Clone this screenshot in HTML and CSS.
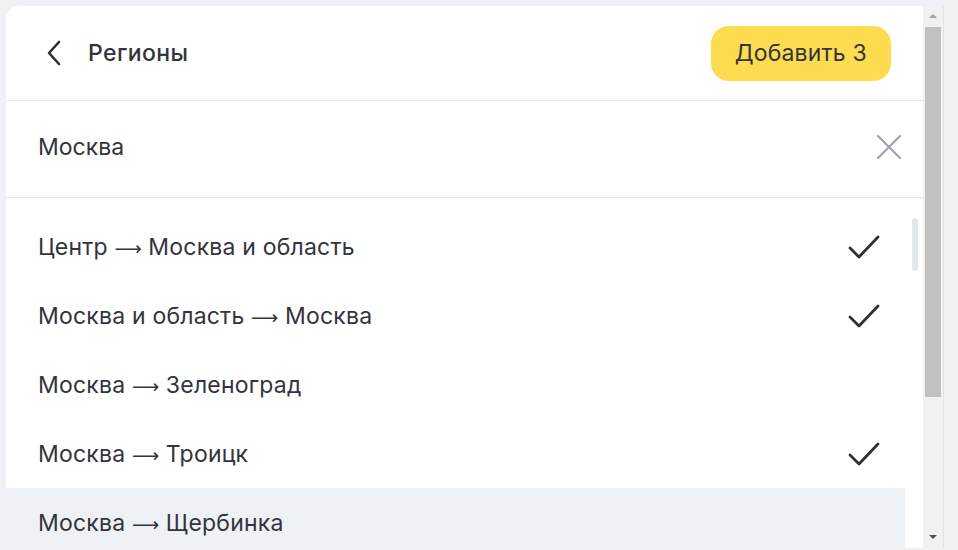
FILE: index.html
```html
<!DOCTYPE html>
<html lang="ru">
<head>
  <meta charset="UTF-8">
  <meta name="viewport" content="width=device-width, initial-scale=1.0">
  <title>Регионы</title>
  <link rel="stylesheet" href="styles.css">
</head>
<body>
  <div class="panel">
    <div class="dialog">
      <div class="dialog-header">
        <button class="back-btn" aria-label="Назад">
          <svg width="16" height="26" viewBox="0 0 16 26"><path d="M13 2 L3 13 L13 24" fill="none" stroke="#2e2f38" stroke-width="2.6" stroke-linecap="round" stroke-linejoin="round"/></svg>
        </button>
        <div class="dialog-title">Регионы</div>
        <button class="add-btn">Добавить 3</button>
      </div>
      <div class="search">
        <div class="search-text">Москва</div>
        <button class="clear-btn" aria-label="Очистить">
          <svg width="26" height="26" viewBox="0 0 26 26"><path d="M2 2 L24 24 M24 2 L2 24" fill="none" stroke="#9fa3b4" stroke-width="2.2" stroke-linecap="round"/></svg>
        </button>
      </div>
      <div class="list-wrap">
        <ul class="region-list">
          <li class="region-item">
            <span>Центр <span class="arrow">⟶</span> Москва и область</span>
            <svg class="check" width="32" height="26" viewBox="0 0 32 26"><path d="M2 14 L11 23 L30 3" fill="none" stroke="#2e2f38" stroke-width="2.8" stroke-linecap="round" stroke-linejoin="round"/></svg>
          </li>
          <li class="region-item">
            <span>Москва и область <span class="arrow">⟶</span> Москва</span>
            <svg class="check" width="32" height="26" viewBox="0 0 32 26"><path d="M2 14 L11 23 L30 3" fill="none" stroke="#2e2f38" stroke-width="2.8" stroke-linecap="round" stroke-linejoin="round"/></svg>
          </li>
          <li class="region-item">
            <span>Москва <span class="arrow">⟶</span> Зеленоград</span>
          </li>
          <li class="region-item">
            <span>Москва <span class="arrow">⟶</span> Троицк</span>
            <svg class="check" width="32" height="26" viewBox="0 0 32 26"><path d="M2 14 L11 23 L30 3" fill="none" stroke="#2e2f38" stroke-width="2.8" stroke-linecap="round" stroke-linejoin="round"/></svg>
          </li>
          <li class="region-item region-item_hover">
            <span>Москва <span class="arrow">⟶</span> Щербинка</span>
          </li>
        </ul>
        <div class="list-scroll">
          <div class="list-scroll-thumb"></div>
        </div>
      </div>
    </div>
    <div class="scrollbar">
      <div class="scrollbar-arrow scrollbar-arrow_up"></div>
      <div class="scrollbar-thumb"></div>
      <div class="scrollbar-track"></div>
      <div class="scrollbar-arrow scrollbar-arrow_down"></div>
    </div>
  </div>
</body>
</html>
```

FILE: styles.css
```css
* {
  margin: 0;
  padding: 0;
  box-sizing: border-box;
}

body {
  background-color: #eff1f4;
  font-family: Inter, "Noto Sans", sans-serif;
  color: #33343d;
  padding: 6px 0 0 6px;
  height: 550px;
  overflow: hidden;
}

.panel {
  width: 938px;
  height: 542px;
  display: flex;
  background-color: #fff;
  border-radius: 14px 0 0 0;
  overflow: hidden;
}

.dialog {
  flex: 1;
  display: flex;
  flex-direction: column;
  min-width: 0;
}

.dialog-header {
  height: 95px;
  flex-shrink: 0;
  display: flex;
  align-items: center;
  padding: 0 32px 0 40px;
  border-bottom: 1px solid #e7e9ed;
}

button {
  border: none;
  background: none;
  font: inherit;
  color: inherit;
  cursor: pointer;
}

.back-btn {
  display: flex;
  width: 20px;
  margin-right: 22px;
}

.dialog-title {
  flex: 1;
  font-size: 23px;
  font-weight: 500;
  letter-spacing: 0.4px;
}

.add-btn {
  height: 55px;
  padding: 0 24px;
  border-radius: 18px;
  background-color: #fddc50;
  font-size: 23px;
  letter-spacing: 0.2px;
}

.search {
  height: 97px;
  flex-shrink: 0;
  display: flex;
  align-items: center;
  justify-content: space-between;
  padding: 0 21px 4px 32px;
  border-bottom: 1px solid #e7e9ed;
}

.search-text {
  font-size: 23px;
}

.clear-btn {
  display: flex;
}

.list-wrap {
  flex: 1;
  display: flex;
  overflow: hidden;
}

.region-list {
  flex: 1;
  list-style-type: none;
  padding-top: 14px;
}

.region-item {
  height: 69px;
  display: flex;
  align-items: center;
  justify-content: space-between;
  padding: 0 25px 0 32px;
  font-size: 23px;
  letter-spacing: 0.2px;
}

.arrow {
  font-family: "DejaVu Sans", sans-serif;
  font-size: 19px;
  letter-spacing: 0;
}

.region-item_hover {
  background-color: #eef1f6;
}

.list-scroll {
  width: 18px;
  padding: 20px 0 0 7px;
}

.list-scroll-thumb {
  width: 6px;
  height: 53px;
  border-radius: 3px;
  background-color: #e4e6ee;
}

.scrollbar {
  width: 21px;
  display: flex;
  flex-direction: column;
  background-color: #f1f1f1;
  border-right: 1px solid #e3e3e3;
}

.scrollbar-arrow {
  height: 21px;
  flex-shrink: 0;
  position: relative;
}

.scrollbar-arrow:after {
  content: '';
  position: absolute;
  left: 6px;
  border-left: 4px solid transparent;
  border-right: 4px solid transparent;
}

.scrollbar-arrow_up:after {
  top: 8px;
  border-bottom: 4px solid #a3a3a3;
}

.scrollbar-arrow_down:after {
  top: 8px;
  border-top: 4px solid #505050;
}

.scrollbar-thumb {
  height: 370px;
  margin: 0 2px;
  background-color: #c1c1c1;
}

.scrollbar-track {
  flex: 1;
}
```
